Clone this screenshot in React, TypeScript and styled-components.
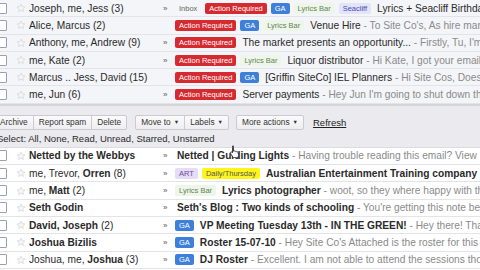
import React from 'react';
import styled, { createGlobalStyle } from 'styled-components';

const GlobalStyle = createGlobalStyle`
  html, body {
    margin: 0;
    padding: 0;
    background: #ffffff;
    overflow: hidden;
  }
  body {
    font-family: "Liberation Sans", Arial, sans-serif;
    font-size: 10.2px;
    color: #2a2a2a;
  }
`;

const Page = styled.div`
  width: 480px;
  height: 270px;
  overflow: hidden;
  position: relative;
`;

const List = styled.div`
  display: flex;
  flex-direction: column;
`;

const Row = styled.div<{ $read?: boolean }>`
  display: flex;
  align-items: center;
  height: 17.3px;
  box-sizing: border-box;
  border-bottom: 1px solid #e2e4e9;
  background: ${(p) => (p.$read ? '#f4f5f8' : '#ffffff')};
  white-space: nowrap;
  overflow: hidden;
`;

const Check = styled.span`
  flex: none;
  width: 9px;
  height: 9px;
  margin-left: -4px;
  border: 1px solid #9aa1ad;
  border-radius: 1px;
  background: #fff;
`;

const StarBox = styled.span`
  flex: none;
  display: flex;
  align-items: center;
  margin-left: 9px;
  width: 13px;
`;

const Sender = styled.span<{ $bold?: boolean }>`
  flex: none;
  width: 134px;
  overflow: hidden;
  font-weight: ${(p) => (p.$bold ? 700 : 400)};
  color: #2a2a2a;

  b {
    font-weight: 700;
  }
`;

const Chevron = styled.span`
  flex: none;
  width: 12px;
  font-size: 8px;
  color: #555;
`;

const Content = styled.span`
  display: flex;
  align-items: center;
  gap: 4px;
  overflow: hidden;
`;

const Label = styled.span<{ $bg: string; $fg: string }>`
  flex: none;
  display: inline-flex;
  align-items: center;
  height: 11px;
  padding: 0 4px;
  border-radius: 2px;
  background: ${(p) => p.$bg};
  color: ${(p) => p.$fg};
  font-size: 7.5px;
`;

const Text = styled.span`
  margin-left: 2px;
`;

const Subject = styled.span<{ $bold?: boolean }>`
  font-weight: ${(p) => (p.$bold ? 700 : 400)};
  color: #2a2a2a;
`;

const Snippet = styled.span`
  color: #8a8a8a;
`;

const Toolbar = styled.div`
  height: 44px;
  box-sizing: border-box;
  background: #ebebef;
  border-top: 2px solid #d3d5db;
  border-bottom: 1px solid #dadce2;
  display: flex;
  flex-direction: column;
  padding-top: 9px;
`;

const ButtonRow = styled.div`
  display: flex;
  align-items: center;
  margin-left: -6px;
`;

const Group = styled.div<{ $gap: number }>`
  display: flex;
  margin-right: ${(p) => p.$gap}px;
  border: 1px solid #c9cbd1;
  border-radius: 2px;
  background: linear-gradient(#fbfbfc, #eeeef1);
`;

const Btn = styled.span`
  display: inline-flex;
  align-items: center;
  height: 13px;
  padding: 0 5px;
  font-size: 8.3px;
  color: #333;

  & + & {
    border-left: 1px solid #c9cbd1;
  }
`;

const Caret = styled.span`
  font-size: 5.5px;
  margin-left: 3px;
`;

const RefreshLink = styled.span`
  font-size: 9.5px;
  color: #222;
  text-decoration: underline;
`;

const SelectLine = styled.div`
  margin-left: -3px;
  margin-top: 3px;
  font-size: 9.5px;
  color: #2a2a2a;
`;

const Cursor = styled.svg`
  position: absolute;
  left: 229px;
  top: 145px;
`;

type Lbl = { text: string; bg: string; fg: string };

const L = {
  inbox: { text: 'Inbox', bg: 'transparent', fg: '#666' },
  action: { text: 'Action Required', bg: '#d42a30', fg: '#ffffff' },
  ga: { text: 'GA', bg: '#3d7fd9', fg: '#ffffff' },
  lyrics: { text: 'Lyrics Bar', bg: '#eef6ea', fg: '#5f8456' },
  seacliff: { text: 'Seacliff', bg: '#e4e4f9', fg: '#4a4ab8' },
  art: { text: 'ART', bg: '#e6dcf5', fg: '#6a4a9a' },
  daily: { text: 'Daily/Thursday', bg: '#fff51a', fg: '#555' },
};

type Mail = {
  sender: React.ReactNode;
  boldSender?: boolean;
  chevron?: boolean;
  labels: Lbl[];
  subject: string;
  snippet?: string;
  boldSubject?: boolean;
};

const topMails: Mail[] = [
  { sender: 'Joseph, me, Jess (3)', chevron: true, labels: [L.inbox, L.action, L.ga, L.lyrics, L.seacliff], subject: 'Lyrics + Seacliff Birthday' },
  { sender: 'Alice, Marcus (2)', labels: [L.action, L.ga, L.lyrics], subject: 'Venue Hire', snippet: "To Site Co's, As hire manager" },
  { sender: 'Anthony, me, Andrew (9)', chevron: true, labels: [L.action], subject: 'The market presents an opportunity...', snippet: "Firstly, Tu, I'm going" },
  { sender: 'me, Kate (2)', chevron: true, labels: [L.action, L.lyrics], subject: 'Liquor distributor', snippet: 'Hi Kate, I got your email and' },
  { sender: 'Marcus .. Jess, David (15)', labels: [L.action, L.ga], subject: '[Griffin SiteCo] IEL Planners', snippet: 'Hi Site Cos, Does anyone' },
  { sender: 'me, Jun (6)', chevron: true, labels: [L.action], subject: 'Server payments', snippet: "Hey Jun I'm going to shut down the server" },
];

const bottomMails: Mail[] = [
  { sender: 'Netted by the Webbys', boldSender: true, chevron: true, labels: [], subject: 'Netted | Guiding Lights', boldSubject: true, snippet: 'Having trouble reading this email? View it online' },
  { sender: <>me, Trevor, <b>Orren</b> (8)</>, chevron: true, labels: [L.art, L.daily], subject: 'Australian Entertainment Training company details', boldSubject: true },
  { sender: <>me, <b>Matt</b> (2)</>, chevron: true, labels: [L.lyrics], subject: 'Lyrics photographer', boldSubject: true, snippet: 'woot, so they where happy with the photos' },
  { sender: 'Seth Godin', boldSender: true, chevron: true, labels: [], subject: "Seth's Blog : Two kinds of schooling", boldSubject: true, snippet: "You're getting this note because" },
  { sender: <><b>David, Joseph</b> (2)</>, chevron: true, labels: [L.ga], subject: 'VP Meeting Tuesday 13th - IN THE GREEN!', boldSubject: true, snippet: 'Hey there! Thanks' },
  { sender: 'Joshua Bizilis', boldSender: true, chevron: true, labels: [L.ga], subject: 'Roster 15-07-10', boldSubject: true, snippet: "Hey Site Co's Attached is the roster for this month" },
  { sender: <>Joshua, me, <b>Joshua</b> (3)</>, chevron: true, labels: [L.ga], subject: 'DJ Roster', boldSubject: true, snippet: 'Excellent. I am not able to attend the sessions though' },
];

const Star = () => (
  <svg width="10" height="10" viewBox="0 0 24 24">
    <path
      d="M12 2.5l2.9 6.2 6.6.7-5 4.5 1.4 6.6L12 17.2l-5.9 3.3 1.4-6.6-5-4.5 6.6-.7z"
      fill="#f6f6f6"
      stroke="#cfd1d6"
      strokeWidth="1.6"
      strokeLinejoin="round"
    />
  </svg>
);

const MailRow: React.FC<{ mail: Mail; read?: boolean }> = ({ mail, read }) => (
  <Row $read={read}>
    <Check />
    <StarBox>
      <Star />
    </StarBox>
    <Sender $bold={mail.boldSender}>{mail.sender}</Sender>
    <Chevron>{mail.chevron ? '»' : ''}</Chevron>
    <Content>
      {mail.labels.map((l, i) => (
        <Label key={i} $bg={l.bg} $fg={l.fg}>
          {l.text}
        </Label>
      ))}
      <Text>
        <Subject $bold={mail.boldSubject}>{mail.subject}</Subject>
        {mail.snippet && <Snippet> - {mail.snippet}</Snippet>}
      </Text>
    </Content>
  </Row>
);

export default function App() {
  return (
    <Page>
      <GlobalStyle />
      <List>
        {topMails.map((m, i) => (
          <MailRow key={i} mail={m} read />
        ))}
      </List>
      <Toolbar>
        <ButtonRow>
          <Group $gap={8}>
            <Btn>Archive</Btn>
            <Btn>Report spam</Btn>
            <Btn>Delete</Btn>
          </Group>
          <Group $gap={7}>
            <Btn>
              Move to<Caret>▼</Caret>
            </Btn>
            <Btn>
              Labels<Caret>▼</Caret>
            </Btn>
          </Group>
          <Group $gap={9}>
            <Btn>
              More actions<Caret>▼</Caret>
            </Btn>
          </Group>
          <RefreshLink>Refresh</RefreshLink>
        </ButtonRow>
        <SelectLine>Select: All, None, Read, Unread, Starred, Unstarred</SelectLine>
      </Toolbar>
      <List>
        {bottomMails.map((m, i) => (
          <MailRow key={i} mail={m} />
        ))}
      </List>
      <Cursor width="11" height="13" viewBox="0 0 11 13">
        <path
          d="M3.5 1.2c.6 0 1 .4 1 1v4l.4-.2c.5-.2 1 0 1.2.4l.3-.1c.5-.2 1 0 1.2.4.5-.2 1.1 0 1.3.5l.6 2.3c.2.9 0 1.8-.5 2.5l-.6.8H4.3L1.6 8.6c-.4-.5-.3-1.1.2-1.4.4-.3.9-.2 1.2.1l.5.5V2.2c0-.6.4-1 1-1z"
          fill="#fff"
          stroke="#111"
          strokeWidth="0.8"
          strokeLinejoin="round"
        />
      </Cursor>
    </Page>
  );
}
